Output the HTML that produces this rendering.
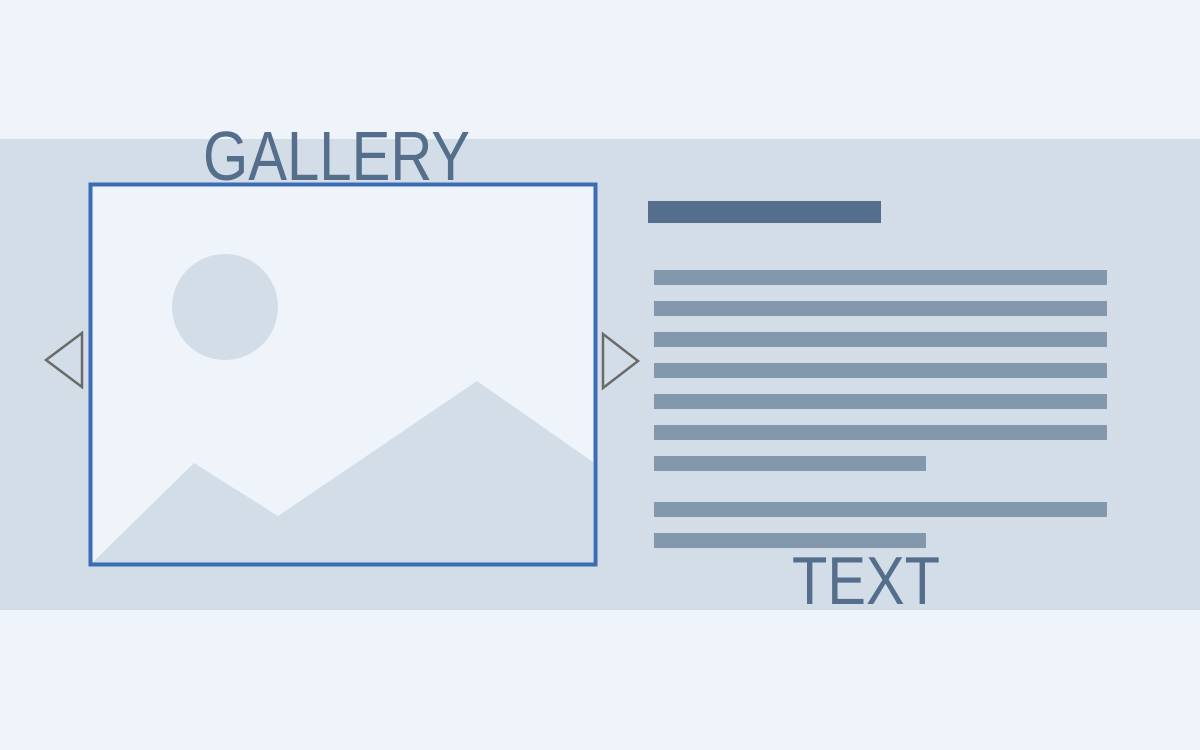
<!DOCTYPE html>
<html><head><meta charset="utf-8"><style>
html,body{margin:0;padding:0;background:#eff4fb;}
svg{display:block}
</style></head><body>
<svg width="1200" height="750" viewBox="0 0 1200 750" xmlns="http://www.w3.org/2000/svg">
<rect x="0" y="0" width="1200" height="750" fill="#eff4fb"/>
<rect x="0" y="139" width="1200" height="471" fill="#d3dde7"/>
<rect x="90.5" y="184.5" width="505" height="380" fill="#eff4fb"/>
<circle cx="225" cy="307" r="53" fill="#d3dde7"/>
<polygon points="92,563 194,463 278,516 477,381 593,462 593,563" fill="#d3dde7"/>
<rect x="90.5" y="184.5" width="505" height="380" fill="none" stroke="#3b6cb5" stroke-width="4"/>
<polygon points="82,333 46,360 82,387" fill="none" stroke="#6a6a6a" stroke-width="2.5"/>
<polygon points="603,334 638,361 603,388" fill="none" stroke="#6a6a6a" stroke-width="2.5"/>
<text x="203" y="180" font-family="Liberation Sans, sans-serif" font-size="70" fill="#546e8c" textLength="267" lengthAdjust="spacingAndGlyphs">GALLERY</text>
<text x="792" y="604" font-family="Liberation Sans, sans-serif" font-size="68" fill="#546e8c" textLength="148" lengthAdjust="spacingAndGlyphs">TEXT</text>
<rect x="648" y="201" width="233" height="22" fill="#546e8c"/>
<g fill="#8398ad">
<rect x="654" y="270" width="453" height="15"/>
<rect x="654" y="301" width="453" height="15"/>
<rect x="654" y="332" width="453" height="15"/>
<rect x="654" y="363" width="453" height="15"/>
<rect x="654" y="394" width="453" height="15"/>
<rect x="654" y="425" width="453" height="15"/>
<rect x="654" y="456" width="272" height="15"/>
<rect x="654" y="502" width="453" height="15"/>
<rect x="654" y="533" width="272" height="15"/>
</g>
</svg>
</body></html>
